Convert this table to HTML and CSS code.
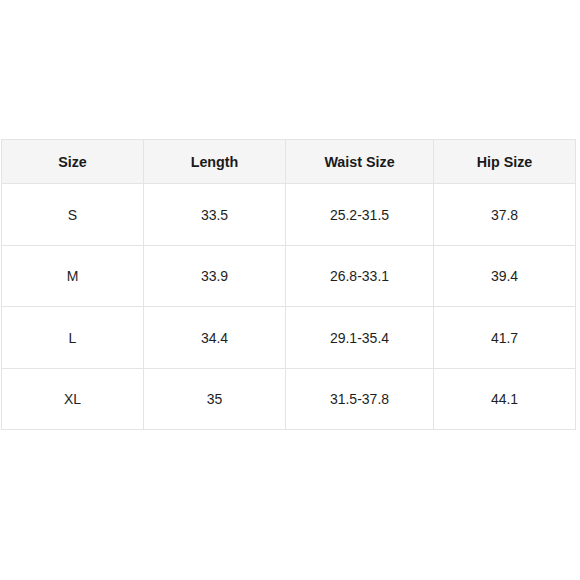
FILE: index.html
```html
<!DOCTYPE html>
<html>
<head>
<meta charset="utf-8">
<link rel="stylesheet" href="styles.css">
</head>
<body>
<div class="page">
<table class="chart">
<thead>
<tr><th class="c1">Size</th><th class="c2">Length</th><th class="c3">Waist Size</th><th class="c4">Hip Size</th></tr>
</thead>
<tbody>
<tr class="tall"><td>S</td><td>33.5</td><td>25.2-31.5</td><td>37.8</td></tr>
<tr class="short"><td>M</td><td>33.9</td><td>26.8-33.1</td><td>39.4</td></tr>
<tr class="tall"><td>L</td><td>34.4</td><td>29.1-35.4</td><td>41.7</td></tr>
<tr class="short"><td>XL</td><td>35</td><td>31.5-37.8</td><td>44.1</td></tr>
</tbody>
</table>
</div>
</body>
</html>
```
FILE: styles.css
```css
html, body {
  margin: 0;
  padding: 0;
  background: #ffffff;
}
.page {
  width: 580px;
  height: 580px;
  padding: 139px 0 0 1px;
  box-sizing: border-box;
}
.chart {
  border-collapse: collapse;
  table-layout: fixed;
  width: 574px;
  font-family: "Liberation Sans", Arial, sans-serif;
  font-size: 14px;
  color: #1e1e1e;
}
.chart th, .chart td {
  border: 1px solid #e4e4e4;
  text-align: center;
  padding: 0;
}
.chart th {
  background: #f5f5f5;
  font-weight: bold;
  height: 43px;
  color: #1a1a1a;
  font-size: 14.3px;
}
.tall td { height: 61px; }
.short td { height: 60px; }
.c1 { width: 141px; }
.c2 { width: 141px; }
.c3 { width: 147px; }
.c4 { width: 141px; }
```
